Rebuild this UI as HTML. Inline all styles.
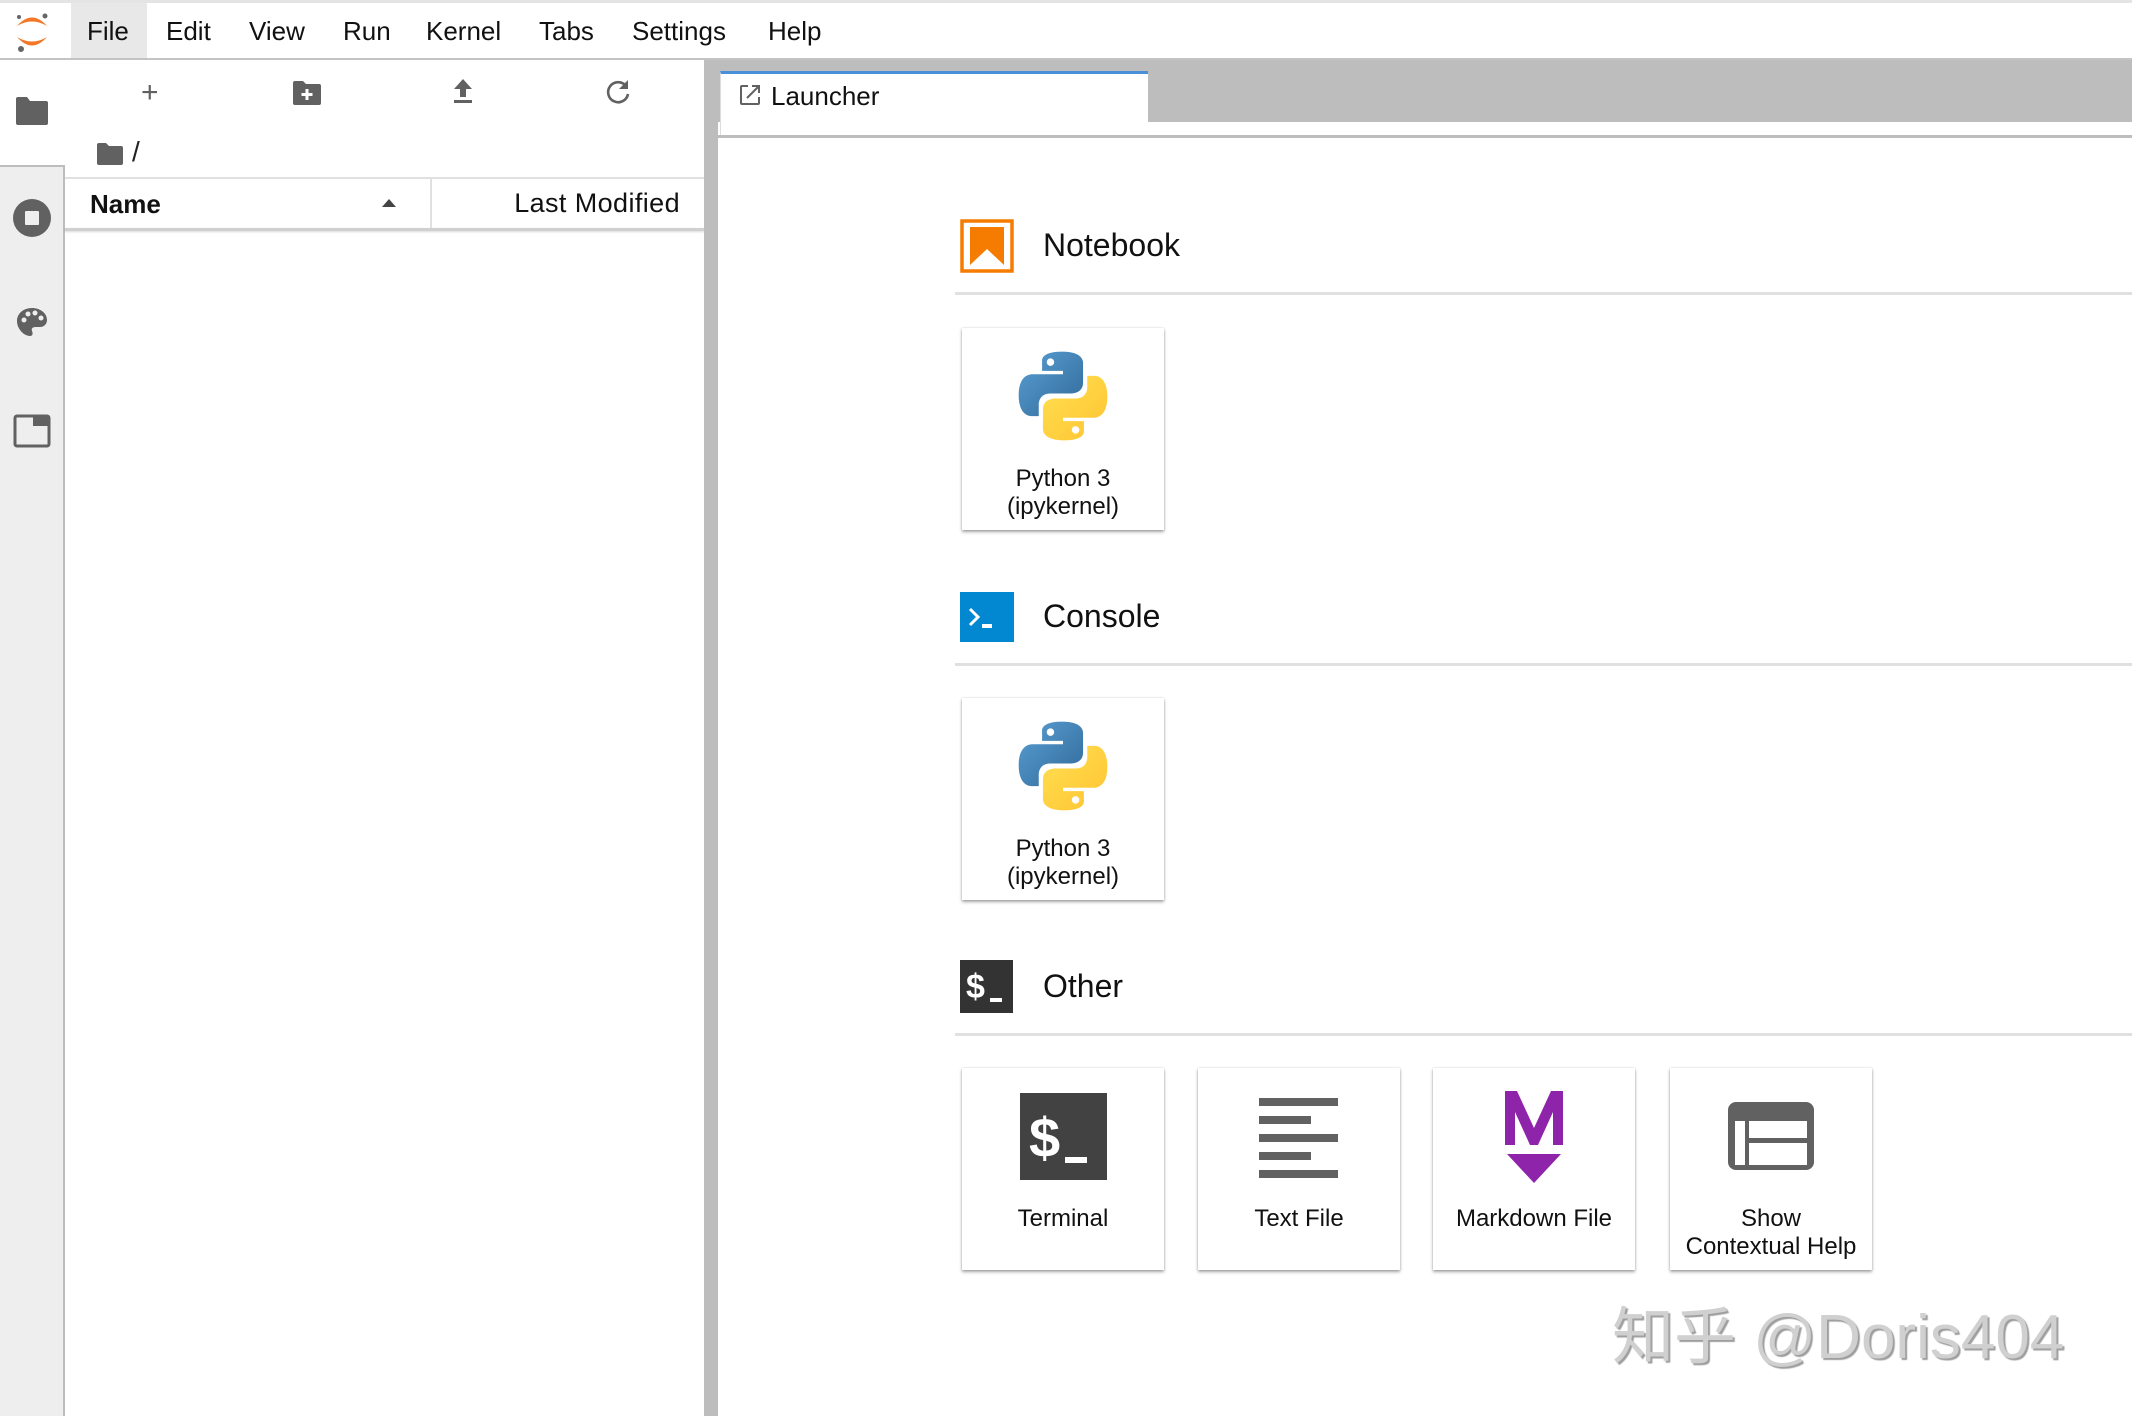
<!DOCTYPE html>
<html><head><meta charset="utf-8"><style>
*{box-sizing:border-box;margin:0;padding:0}
body{width:2132px;height:1416px;overflow:hidden;background:#fff;font-family:"Liberation Sans","Noto Sans CJK SC",sans-serif;color:#000;position:relative}
.a{position:absolute}
.menu span{position:absolute;top:16px;font-size:26px;color:#111}
.card{position:absolute;width:202px;height:202px;background:#fff;box-shadow:0 2px 3px rgba(0,0,0,.35),0 0 2px rgba(0,0,0,.15)}
.card .t{position:absolute;left:0;right:0;text-align:center;font-size:24px;line-height:28px;color:#111}
.sec{position:absolute;left:1043px;font-size:32px;color:#111}
.line{position:absolute;left:955px;right:0;height:3px;background:#e0e0e0}
</style></head><body>
<div class="a" style="left:0;top:0;width:2132px;height:3px;background:#e4e4e4"></div>
<svg class="a" style="left:10px;top:8px" width="44" height="46" viewBox="0 0 44 46">
<path d="M7 18 Q22 1 37 18 Q22 9 7 18Z" fill="#f37726"/>
<path d="M7 29 Q22 46 37 29 Q22 38 7 29Z" fill="#f37726"/>
<circle cx="9" cy="9" r="2" fill="#666"/><circle cx="35" cy="8" r="2.5" fill="#666"/><circle cx="11" cy="41" r="3" fill="#666"/>
</svg>
<div class="a" style="left:71px;top:3px;width:76px;height:57px;background:#e8e8e8"></div>
<div class="menu">
<span style="left:87px">File</span><span style="left:166px">Edit</span><span style="left:249px">View</span><span style="left:343px">Run</span><span style="left:426px">Kernel</span><span style="left:539px">Tabs</span><span style="left:632px">Settings</span><span style="left:768px">Help</span>
</div>
<div class="a" style="left:0;top:58px;width:2132px;height:2px;background:#c4c4c4"></div>
<div class="a" style="left:0;top:165px;width:65px;height:1251px;background:#eeeeee;border-right:2px solid #bdbdbd;border-top:2px solid #bdbdbd"></div>
<svg class="a" style="left:14px;top:96px" width="36" height="30" viewBox="0 0 36 30"><path d="M2 3 Q2 1 4 1 H13 L16 5 H32 Q34 5 34 7 V27 Q34 29 32 29 H4 Q2 29 2 27Z" fill="#616161"/></svg>
<svg class="a" style="left:12px;top:198px" width="40" height="40" viewBox="0 0 40 40"><circle cx="20" cy="20" r="19" fill="#616161"/><rect x="13" y="13" width="14" height="14" rx="1" fill="#eee"/></svg>
<svg class="a" style="left:16px;top:306px" width="32" height="32" viewBox="0 0 32 32"><path d="M16 2 C7 2 1 8 1 15 C1 23 8 30 14 30 C17 30 17 27 16 25 C15 22 17 21 20 21 H24 C28 21 31 18 31 14 C31 7 24 2 16 2Z" fill="#616161"/><circle cx="8" cy="14" r="2.5" fill="#eee"/><circle cx="12" cy="8" r="2.5" fill="#eee"/><circle cx="19" cy="7" r="2.5" fill="#eee"/><circle cx="25" cy="12" r="2.5" fill="#eee"/></svg>
<svg class="a" style="left:13px;top:414px" width="38" height="34" viewBox="0 0 38 34"><rect x="2" y="2" width="34" height="30" rx="2" fill="none" stroke="#616161" stroke-width="3"/><rect x="20" y="2" width="16" height="10" fill="#616161"/></svg>
<div class="a" style="left:141px;top:78px;font-size:30px;color:#616161;line-height:30px">+</div>
<svg class="a" style="left:292px;top:80px" width="30" height="26" viewBox="0 0 30 26"><path d="M1 3 Q1 1 3 1 H11 L14 4 H27 Q29 4 29 6 V23 Q29 25 27 25 H3 Q1 25 1 23Z" fill="#616161"/><path d="M15 9 V20 M9.5 14.5 H20.5" stroke="#fff" stroke-width="3"/></svg>
<svg class="a" style="left:452px;top:78px" width="22" height="26" viewBox="0 0 22 26"><path d="M11 1 L20 11 H14 V19 H8 V11 H2Z" fill="#616161"/><rect x="2" y="22" width="18" height="3" fill="#616161"/></svg>
<svg class="a" style="left:604px;top:78px" width="28" height="28" viewBox="0 0 28 28"><path d="M22 8 A10 10 0 1 0 24 16" fill="none" stroke="#616161" stroke-width="2.6"/><path d="M24 2 V11 H15Z" fill="#616161"/></svg>
<svg class="a" style="left:96px;top:142px" width="28" height="24" viewBox="0 0 28 24"><path d="M1 3 Q1 1 3 1 H10 L13 4 H25 Q27 4 27 6 V21 Q27 23 25 23 H3 Q1 23 1 21Z" fill="#616161"/></svg>
<div class="a" style="left:132px;top:136px;font-size:28px;color:#222">/</div>
<div class="a" style="left:65px;top:177px;width:639px;height:2px;background:#e0e0e0"></div>
<div class="a" style="left:65px;top:228px;width:639px;height:3px;background:#d0d0d0;box-shadow:0 1px 2px rgba(0,0,0,.15)"></div>
<div class="a" style="left:430px;top:179px;width:2px;height:49px;background:#e0e0e0"></div>
<div class="a" style="left:90px;top:189px;font-size:26px;font-weight:bold;color:#111">Name</div>
<svg class="a" style="left:382px;top:198px" width="14" height="10"><path d="M0 9 L7 1 L14 9Z" fill="#444"/></svg>
<div class="a" style="left:430px;top:188px;width:250px;text-align:right;font-size:27px;letter-spacing:0.4px;color:#111">Last Modified</div>
<div class="a" style="left:704px;top:60px;width:14px;height:1356px;background:#bdbdbd"></div>
<div class="a" style="left:718px;top:60px;width:1414px;height:62px;background:#bdbdbd"></div>
<div class="a" style="left:720px;top:71px;width:428px;height:65px;background:#fff;border-top:3px solid #4a90d9;border-left:1px solid #ddd"></div>
<div class="a" style="left:718px;top:135px;width:1414px;height:3px;background:#bdbdbd"></div>
<svg class="a" style="left:739px;top:84px" width="22" height="22" viewBox="0 0 22 22"><path d="M9 2 H3 Q2 2 2 3 V19 Q2 20 3 20 H19 Q20 20 20 19 V13" fill="none" stroke="#616161" stroke-width="2"/><path d="M8 14 L19 3 M13 2 H20 V9" fill="none" stroke="#616161" stroke-width="2"/></svg>
<div class="a" style="left:771px;top:81px;font-size:26px;color:#111">Launcher</div>
<svg class="a" style="left:960px;top:219px" width="54" height="54" viewBox="0 0 54 54"><rect x="2" y="2" width="50" height="50" fill="none" stroke="#f57c00" stroke-width="3.5"/><path d="M10 8 H44 V46 L27 30 L10 46Z" fill="#f57c00"/></svg>
<div class="sec" style="top:227px">Notebook</div>
<div class="line" style="top:292px"></div>
<svg width="0" height="0" style="position:absolute"><defs><linearGradient id="b" x1="0" y1="0" x2="1" y2="1"><stop offset="0" stop-color="#5a9fd4"/><stop offset="1" stop-color="#306998"/></linearGradient><linearGradient id="y" x1="0" y1="0" x2="1" y2="1"><stop offset="0" stop-color="#ffe052"/><stop offset="1" stop-color="#ffc331"/></linearGradient></defs></svg>
<div class="card" style="left:962px;top:328px">
<svg class="a" style="left:55px;top:22px" width="92" height="92" viewBox="0 0 110 110">
<path d="M54 2 C28 2 30 13 30 13 V25 H55 V29 H19 C19 29 2 27 2 54 C2 80 17 79 17 79 H26 V66 C26 66 25 52 40 52 H65 C65 52 79 52 79 39 V16 C79 16 81 2 54 2Z M40 10 A4.5 4.5 0 1 1 40 19 A4.5 4.5 0 1 1 40 10Z" fill="url(#b)"/>
<path d="M56 108 C82 108 80 97 80 97 V85 H55 V81 H91 C91 81 108 83 108 56 C108 30 93 31 93 31 H84 V44 C84 44 85 58 70 58 H45 C45 58 31 58 31 71 V94 C31 94 29 108 56 108Z M70 100 A4.5 4.5 0 1 1 70 91 A4.5 4.5 0 1 1 70 100Z" fill="url(#y)"/></svg>
<div class="t" style="top:137px">Python 3<br>(ipykernel)</div></div>
<svg class="a" style="left:960px;top:592px" width="54" height="50" viewBox="0 0 54 50"><rect width="54" height="50" fill="#0288d1"/><path d="M10 17 L18 25 L10 33" fill="none" stroke="#fff" stroke-width="3"/><rect x="22" y="32" width="10" height="4" fill="#fff"/></svg>
<div class="sec" style="top:598px">Console</div>
<div class="line" style="top:663px"></div>
<div class="card" style="left:962px;top:698px">
<svg class="a" style="left:55px;top:22px" width="92" height="92" viewBox="0 0 110 110">
<path d="M54 2 C28 2 30 13 30 13 V25 H55 V29 H19 C19 29 2 27 2 54 C2 80 17 79 17 79 H26 V66 C26 66 25 52 40 52 H65 C65 52 79 52 79 39 V16 C79 16 81 2 54 2Z M40 10 A4.5 4.5 0 1 1 40 19 A4.5 4.5 0 1 1 40 10Z" fill="url(#b)"/>
<path d="M56 108 C82 108 80 97 80 97 V85 H55 V81 H91 C91 81 108 83 108 56 C108 30 93 31 93 31 H84 V44 C84 44 85 58 70 58 H45 C45 58 31 58 31 71 V94 C31 94 29 108 56 108Z M70 100 A4.5 4.5 0 1 1 70 91 A4.5 4.5 0 1 1 70 100Z" fill="url(#y)"/></svg>
<div class="t" style="top:137px">Python 3<br>(ipykernel)</div></div>
<div class="a" style="left:960px;top:960px;width:53px;height:53px;background:#333"><span style="position:absolute;left:6px;top:8px;color:#fff;font-size:34px;font-weight:bold">$</span><span style="position:absolute;left:30px;top:38px;width:12px;height:4px;background:#fff"></span></div>
<div class="sec" style="top:968px">Other</div>
<div class="line" style="top:1033px"></div>
<div class="card" style="left:962px;top:1068px">
<div class="a" style="left:58px;top:25px;width:87px;height:87px;background:#424242"><span style="position:absolute;left:9px;top:12px;color:#fff;font-size:56px;font-weight:bold">$</span><span style="position:absolute;left:45px;top:64px;width:22px;height:6px;background:#fff"></span></div>
<div class="t" style="top:137px">Terminal</div></div>
<div class="card" style="left:1198px;top:1068px">
<div class="a" style="left:61px;top:30px;width:79px;height:8px;background:#616161"></div>
<div class="a" style="left:61px;top:48px;width:52px;height:8px;background:#616161"></div>
<div class="a" style="left:61px;top:66px;width:79px;height:8px;background:#616161"></div>
<div class="a" style="left:61px;top:84px;width:52px;height:8px;background:#616161"></div>
<div class="a" style="left:61px;top:102px;width:79px;height:8px;background:#616161"></div>
<div class="t" style="top:137px">Text File</div></div>
<div class="card" style="left:1433px;top:1068px">
<svg class="a" style="left:71px;top:22px" width="60" height="94" viewBox="0 0 60 94"><path d="M1 1 H13 L30 38 L47 1 H59 V55 H49 V22 L34 55 H26 L11 22 V55 H1Z" fill="#8e24aa"/><path d="M3 64 H57 L30 93Z" fill="#8e24aa"/></svg>
<div class="t" style="top:137px">Markdown File</div></div>
<div class="card" style="left:1670px;top:1068px">
<svg class="a" style="left:57px;top:33px" width="88" height="70" viewBox="0 0 88 70"><rect x="1" y="1" width="86" height="68" rx="8" fill="#616161"/><rect x="8" y="20" width="10" height="44" fill="#fff"/><rect x="22" y="20" width="58" height="17" fill="#fff"/><rect x="22" y="42" width="58" height="22" fill="#fff"/></svg>
<div class="t" style="top:137px">Show<br>Contextual Help</div></div>
<div class="a" style="left:1612px;top:1286px;font-size:62px;color:#d0d0d0;text-shadow:2px 2px 1px #9e9e9e;letter-spacing:0px">知乎 @Doris404</div>
</body></html>
